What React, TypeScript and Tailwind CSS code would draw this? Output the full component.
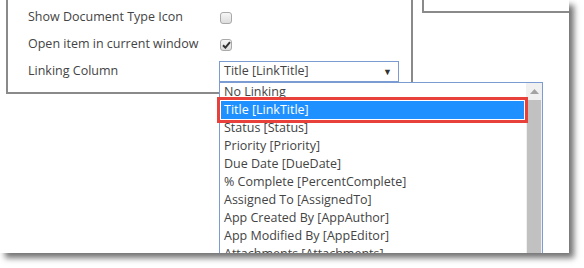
import React from "react";

const items = [
  "No Linking",
  "Title [LinkTitle]",
  "Status [Status]",
  "Priority [Priority]",
  "Due Date [DueDate]",
  "% Complete [PercentComplete]",
  "Assigned To [AssignedTo]",
  "App Created By [AppAuthor]",
  "App Modified By [AppEditor]",
  "Attachments [Attachments]",
];

const Checkbox = ({ checked }: { checked?: boolean }) => (
  <div className="w-[12px] h-[12px] ml-[1px] rounded-[3px] border border-[#a9a9a9] bg-gradient-to-b from-[#f6f6f6] to-[#dddddd] flex items-center justify-center">
    {checked && (
      <svg width="9" height="8" viewBox="0 0 9 8">
        <path d="M1 4.2 L3.4 6.6 L8 1.2" fill="none" stroke="#333" strokeWidth="2" />
      </svg>
    )}
  </div>
);

const Row = ({ label, children }: { label: string; children: React.ReactNode }) => (
  <div className="flex items-center h-[27px]">
    <div className="w-[191px]">{label}</div>
    {children}
  </div>
);

export default function App() {
  return (
    <div className="w-[584px] h-[268px] bg-white">
      <div className="relative w-[569px] h-[253px] bg-white overflow-hidden shadow-[5px_5px_6px_rgba(0,0,0,0.55)] font-['Open_Sans',sans-serif] text-[12.5px] text-[#444]">
        <div className="flex items-start">
          {/* settings panel */}
          <div className="ml-[6px] w-[407px] h-[94px] border-x-2 border-b-2 border-[#8a8a8a] pt-[4px] pl-[20px]">
            <Row label="Show Document Type Icon">
              <Checkbox />
            </Row>
            <Row label="Open item in current window">
              <Checkbox checked />
            </Row>
            <Row label="Linking Column">
              <div className="w-[180px] h-[21px] border border-[#7a9cd3] flex items-center justify-between pl-[4px] pr-[6px]">
                <span>Title [LinkTitle]</span>
                <span className="text-[9px] text-[#333]">▼</span>
              </div>
            </Row>
          </div>
          <div className="ml-[9px] flex-1 h-[13px] border-l-2 border-b-2 border-[#8a8a8a]" />
        </div>

        {/* open dropdown */}
        <div className="absolute left-[219px] top-[82px] w-[324px] h-[200px] border border-[#7a9cd3] bg-white flex">
          <ul className="flex-1">
            {items.map((it, i) => (
              <li
                key={it}
                className={
                  i === 1
                    ? "h-[18px] pl-[4px] leading-[18px] bg-[#1e90ff] text-white"
                    : "h-[18px] pl-[4px] leading-[18px]"
                }
              >
                {it}
              </li>
            ))}
          </ul>
          <div className="w-[16px] bg-[#f0f0f0] flex flex-col">
            <div className="h-[17px] flex items-center justify-center">
              <svg width="9" height="5" viewBox="0 0 9 5">
                <path d="M0 5 L4.5 0 L9 5 Z" fill="#a3a3a3" />
              </svg>
            </div>
            <div className="flex-1 mx-[1px] bg-[#c1c1c1]" />
          </div>
        </div>

        {/* annotation */}
        <div className="absolute left-[217px] top-[97px] w-[311px] h-[26px] border-[3px] border-[#e8413c] shadow-[inset_0_0_0_1px_white]" />
      </div>
    </div>
  );
}
